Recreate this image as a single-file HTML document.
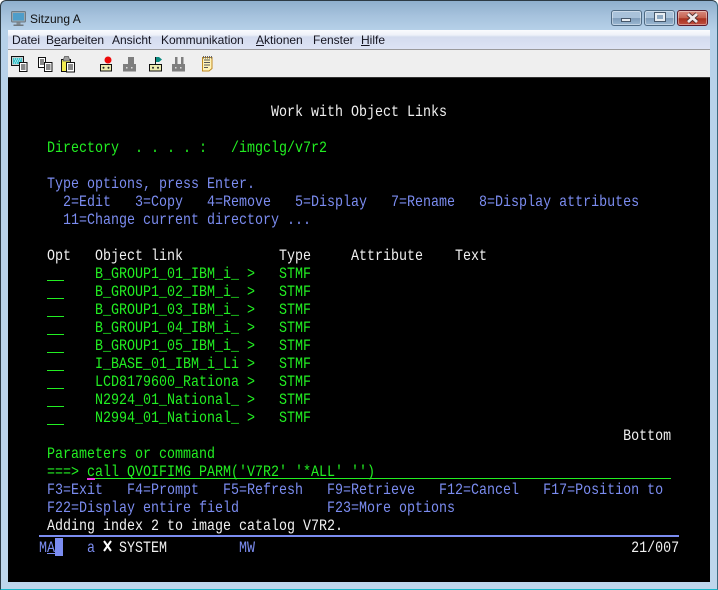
<!DOCTYPE html>
<html><head><meta charset="utf-8"><style>
html,body{margin:0;padding:0;background:#fff}
#w{position:relative;width:718px;height:590px;overflow:hidden;background:linear-gradient(180deg,#8eafcd 0,#a5c1dc 14px,#b7d1e9 30px,#bed6ec 100%);box-sizing:border-box;border:1px solid #2c3a44;border-bottom-color:#19b6c8;border-right-color:#3a6a80;border-radius:6px 6px 0 0}
.a{position:absolute}
#t{left:29px;top:10px;font:12px/16px "Liberation Sans",sans-serif;color:#111}
#m{left:7px;top:29px;width:702px;height:19px;background:linear-gradient(180deg,#fafbfe 0,#eef1f9 5px,#d4dbee 7px,#d8dff1 13px,#dde3f4 19px);border-bottom:1px solid #9a9a9c}
#m span{position:absolute;top:2px;font:12px/16px "Liberation Sans",sans-serif;color:#151520;white-space:nowrap}
#b{left:7px;top:49px;width:702px;height:27px;background:#efefef}
#k{left:7px;top:76px;width:702px;height:504px;background:#000;border-top:1px solid #333}
.btn{top:9px;height:14px;width:29px;border:1px solid #4f6b84;border-radius:3px;box-shadow:inset 0 0 0 1px rgba(255,255,255,.4);background:linear-gradient(180deg,#a9c2da 0,#a9c2da 50%,#7f9cb9 52%,#9bb8d3 100%)}
.l{position:absolute;left:14px;margin:0;height:18px;font:16px/18px "Liberation Mono",monospace;white-space:pre;transform:scaleX(.8333);transform-origin:0 0;width:900px}
.g{color:#22ee22}.u{color:#7b8cf0}.h{color:#f0f0f0}
</style></head><body><div id="w">
<svg class="a" style="left:9px;top:9px" width="17" height="17" viewBox="0 0 17 17"><rect x="1.500" y="1.500" width="14" height="10.500" rx="1" fill="#9aa6ae" stroke="#6d7a84"/><rect x="3" y="3" width="11" height="7.500" fill="#4f9dc9"/><rect x="6.500" y="12.500" width="4" height="2" fill="#848c92"/><rect x="3.500" y="14.500" width="10" height="1.500" fill="#70787e"/></svg>
<div class="a" id="t">Sitzung A</div>
<div class="a btn" style="left:610px"><div class="a" style="left:9px;top:7px;width:8px;height:2px;background:#e8edf2;border:1px solid #46576a"></div></div>
<div class="a btn" style="left:643px"><div class="a" style="left:10px;top:2px;width:6px;height:4px;background:#8fa9c2;border:2px solid #e8edf2;outline:1px solid #46576a"></div></div>
<div class="a btn" style="left:676px;border-color:#5d1a2a;background:linear-gradient(180deg,#d78a7e 0,#c5614f 50%,#a8301e 54%,#c05040 100%)"><svg class="a" style="left:8px;top:1px" width="13" height="12" viewBox="0 0 13 12"><path d="M2 2L11 10M11 2L2 10" stroke="#4a2a2a" stroke-width="4.500"/><path d="M2 2L11 10M11 2L2 10" stroke="#f0e8e8" stroke-width="2.800"/></svg></div>
<div class="a" id="m">
<span style="left:4px">Datei</span><span style="left:38px">B<u>e</u>arbeiten</span><span style="left:104px">Ansicht</span><span style="left:153px">Kommunikation</span><span style="left:248px"><u>A</u>ktionen</span><span style="left:305px">Fenster</span><span style="left:353px"><u>H</u>ilfe</span>
</div>
<div class="a" id="b"></div>
<!-- svg origin = page (10,55) -->
<svg class="a" style="left:9px;top:54px" width="210" height="20" viewBox="0 0 210 20">
<rect x="1.500" y="1.500" width="12" height="9" fill="#c8d0d0" stroke="#111"/><rect x="3" y="3" width="9" height="6" fill="#3fc0c8"/><path d="M4 4h1M6 4h1M8 4h1M10 4h1M5 6h1M7 6h1M9 6h1M4 8h1M6 8h1" stroke="#d8ffff"/><rect x="9.500" y="7.500" width="7.500" height="9" fill="#fff" stroke="#111"/><path d="M11 10h4.500M11 12h4.500M11 14h4.500" stroke="#111"/>
<rect x="28.500" y="2.500" width="7" height="10" fill="#fff" stroke="#111"/><path d="M30 5h4M30 7h4M30 9h4" stroke="#111"/><rect x="34.500" y="7.500" width="7.500" height="9" fill="#fff" stroke="#111"/><path d="M36 10h4.500M36 12h4.500M36 14h4.500" stroke="#111"/>
<rect x="51.500" y="4.500" width="9" height="12" fill="#f4ec50" stroke="#111"/><path d="M53 6l1.500-4.500h4L60 6z" fill="#a0a0a0" stroke="#555" stroke-width=".7"/><rect x="56.500" y="7.500" width="8" height="9.500" fill="#fff" stroke="#111"/><path d="M58 10h5M58 12h5M58 14h5" stroke="#111"/>
<circle cx="98" cy="5" r="3.500" fill="#ee0a0a"/><rect x="90.500" y="9.500" width="11" height="6.500" fill="#ecebb0" stroke="#111"/><circle cx="93.500" cy="12.800" r="1" fill="#222"/><circle cx="98.500" cy="12.800" r="1" fill="#222"/>
<rect x="118" y="2" width="6" height="7" fill="#7e7e7e"/><rect x="113" y="9" width="13" height="7.500" fill="#7e7e7e"/><rect x="116" y="12" width="1.500" height="1.500" fill="#ddd"/><rect x="121" y="12" width="1.500" height="1.500" fill="#ddd"/>
<path d="M145.500 2v7" stroke="#111"/><path d="M146 2h3l3 2.500-3 2.500h-3z" fill="#0a8a80"/><rect x="139.500" y="9.500" width="12" height="6.500" fill="#ecebb0" stroke="#111"/><circle cx="143" cy="12.800" r="1" fill="#222"/><circle cx="148" cy="12.800" r="1" fill="#222"/>
<rect x="165" y="2" width="2.500" height="7" fill="#7e7e7e"/><rect x="171" y="2" width="2.500" height="7" fill="#7e7e7e"/><rect x="162" y="9" width="13" height="7.500" fill="#7e7e7e"/><rect x="165" y="12" width="1.500" height="1.500" fill="#ddd"/><rect x="170" y="12" width="1.500" height="1.500" fill="#ddd"/>
<path d="M192.500 2.500h9.500v11l-3 2.500h-6.500z" fill="#fff3b8" stroke="#c08a20"/><path d="M194 5h6M194 7.500h6M194 10h6M194 12.500h4" stroke="#555"/><path d="M193.500 1v2.500M195.500 1v2.500M197.500 1v2.500M199.500 1v2.500M201.500 1v2.500" stroke="#666"/>
</svg>
<div class="a" id="k"></div>
<div class="a" style="left:0;top:-1px;width:716px;height:588px">
<pre class="l h" style="top:103px">                                Work with Object Links</pre>
<pre class="l g" style="top:139px">    Directory  . . . . :   /imgclg/v7r2</pre>
<pre class="l u" style="top:175px">    Type options, press Enter.</pre>
<pre class="l u" style="top:193px">      2=Edit   3=Copy   4=Remove   5=Display   7=Rename   8=Display attributes</pre>
<pre class="l u" style="top:211px">      11=Change current directory ...</pre>
<pre class="l h" style="top:247px">    Opt   Object link            Type     Attribute    Text</pre>
<pre class="l g" style="top:265px">          B_GROUP1_01_IBM_i_ &gt;   STMF</pre>
<pre class="l g" style="top:283px">          B_GROUP1_02_IBM_i_ &gt;   STMF</pre>
<pre class="l g" style="top:301px">          B_GROUP1_03_IBM_i_ &gt;   STMF</pre>
<pre class="l g" style="top:319px">          B_GROUP1_04_IBM_i_ &gt;   STMF</pre>
<pre class="l g" style="top:337px">          B_GROUP1_05_IBM_i_ &gt;   STMF</pre>
<pre class="l g" style="top:355px">          I_BASE_01_IBM_i_Li &gt;   STMF</pre>
<pre class="l g" style="top:373px">          LCD8179600_Rationa &gt;   STMF</pre>
<pre class="l g" style="top:391px">          N2924_01_National_ &gt;   STMF</pre>
<pre class="l g" style="top:409px">          N2994_01_National_ &gt;   STMF</pre>
<pre class="l h" style="top:427px">                                                                            Bottom</pre>
<pre class="l g" style="top:445px">    Parameters or command</pre>
<pre class="l g" style="top:463px">    ===&gt; call QVOIFIMG PARM('V7R2' '*ALL' '')</pre>
<pre class="l u" style="top:481px">    F3=Exit   F4=Prompt   F5=Refresh   F9=Retrieve   F12=Cancel   F17=Position to</pre>
<pre class="l u" style="top:499px">    F22=Display entire field           F23=More options</pre>
<pre class="l h" style="top:517px">    Adding index 2 to image catalog V7R2.</pre>
<pre class="l" style="top:539px"><span class="u">         a</span>   <span class="h">SYSTEM</span><span class="u">         MW</span></pre>
<pre class="l h" style="top:539px">                                                                             21/007</pre>
<pre class="l u" style="top:539px">   M<u>A</u></pre>
</div>
<div class="a" style="left:46px;top:279px;width:17px;height:1px;background:#22ee22;box-shadow:0 18px #22ee22,0 36px #22ee22,0 54px #22ee22,0 72px #22ee22,0 90px #22ee22,0 108px #22ee22,0 126px #22ee22,0 144px #22ee22"></div>
<div class="a" style="left:86px;top:477px;width:584px;height:1px;background:#22ee22"></div>
<div class="a" style="left:86px;top:477px;width:8px;height:2px;background:#f030e0"></div>
<div class="a" style="left:38px;top:534px;width:640px;height:2px;background:#7b8cf0"></div>
<div class="a" style="left:54px;top:537px;width:8px;height:18px;background:#7b8cf0"></div>
<svg class="a" style="left:102px;top:539px" width="9" height="12" viewBox="0 0 9 12"><path d="M1 1L8 11M8 1L1 11" stroke="#fff" stroke-width="2"/></svg>
</div></body></html>
